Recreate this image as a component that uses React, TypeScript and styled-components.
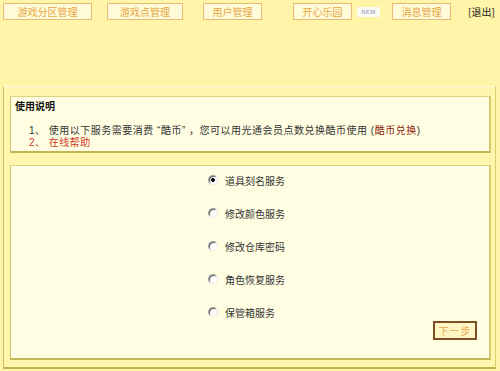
import React, { useState } from "react";
import styled, { createGlobalStyle } from "styled-components";

const Global = createGlobalStyle`
  html, body { margin: 0; padding: 0; background: #fff4a8; }
  body { font-family: "Noto Sans CJK SC", "Noto Sans", sans-serif; }
`;

const Page = styled.div`
  width: 500px;
  height: 371px;
  background: #fff4a8;
  overflow: hidden;
  font-family: "Noto Sans CJK SC", "Noto Sans", sans-serif;
`;

const Nav = styled.div`
  display: flex;
  align-items: center;
  height: 17px;
  padding: 3px 0 0 3px;
`;

const NavButton = styled.div<{ $w: number; $ml: number }>`
  box-sizing: border-box;
  width: ${(p) => p.$w}px;
  margin-left: ${(p) => p.$ml}px;
  height: 17px;
  border: 1px solid #e9bd72;
  box-shadow: inset 0 0 0 1px #fff8dc;
  background: #fffbd6;
  color: #e8a443;
  font-size: 10px;
  line-height: 15px;
  text-align: center;
  white-space: nowrap;
`;

const NewTag = styled.div<{ $ml: number }>`
  margin-left: ${(p) => p.$ml}px;
  width: 23px;
  height: 10px;
  background: #fbfbf2;
  color: #8c96b8;
  font-family: "DejaVu Sans", sans-serif;
  font-size: 6px;
  line-height: 10px;
  text-align: center;
  letter-spacing: 0.3px;
`;

const Exit = styled.div<{ $ml: number }>`
  margin-left: ${(p) => p.$ml}px;
  color: #222;
  font-size: 10px;
  line-height: 17px;
  white-space: nowrap;
`;

const Panel = styled.div`
  box-sizing: border-box;
  margin: 66px 0 0 3px;
  width: 493px;
  height: 283px;
  background: #fff5ad;
  border-top: 1px solid #fffbe2;
  border-left: 1px solid #c7bb5c;
  border-right: 1px solid #d9ce72;
  border-bottom: 2px solid #bdb24f;
  padding: 9px 4px 7px 6px;
  display: flex;
  flex-direction: column;
  gap: 12px;
`;

const Box = styled.div<{ $h: number }>`
  box-sizing: border-box;
  width: 481px;
  height: ${(p) => p.$h}px;
  background: #fffee2;
  border-top: 1px solid #ddd27e;
  border-left: 1px solid #cfc468;
  border-right: 2px solid #d6cb70;
  border-bottom: 2px solid #c2b654;
`;

const InfoBox = styled(Box)`
  padding: 3px 0 0 4px;
`;

const Title = styled.div`
  font-size: 10px;
  line-height: 12px;
  font-weight: bold;
  color: #111;
`;

const InfoList = styled.div`
  margin-top: 13px;
  padding-left: 14px;
  display: flex;
  flex-direction: column;
`;

const InfoLine = styled.div<{ $red?: boolean }>`
  font-family: "Liberation Sans", "Noto Sans CJK SC", sans-serif;
  font-size: 10px;
  line-height: 11.5px;
  height: 11.5px;
  letter-spacing: 0.5px;
  color: ${(p) => (p.$red ? "#d03a2a" : "#333")};
  white-space: nowrap;
`;

const Link = styled.span`
  color: #8a1a0a;
`;

const OptionsBox = styled(Box)`
  padding-top: 8px;
  display: flex;
  flex-direction: column;
`;

const OptionList = styled.div`
  display: flex;
  flex-direction: column;
  gap: 21px;
  padding-left: 197px;
`;

const Option = styled.label`
  display: flex;
  align-items: center;
  height: 12px;
  font-size: 10px;
  color: #333;
  cursor: pointer;
`;

const Radio = styled.input`
  appearance: none;
  -webkit-appearance: none;
  box-sizing: border-box;
  width: 10px;
  height: 10px;
  margin: 0 7px 0 0;
  border-radius: 50%;
  border: 1px solid #a0a0a0;
  border-bottom-color: #e6e6e6;
  border-right-color: #e6e6e6;
  background: #fff;
  box-shadow: inset 1px 1px 0 #606060;
  &:checked {
    background: radial-gradient(circle, #111 0 1.6px, #fff 2.2px);
  }
`;

const Footer = styled.div`
  display: flex;
  justify-content: flex-end;
  padding-right: 12px;
  margin-top: 3px;
`;

const NextButton = styled.button`
  box-sizing: border-box;
  width: 44px;
  height: 19px;
  padding: 0;
  border: 2px solid #7e4e24;
  background: #fff6c6;
  color: #eaa84e;
  font-family: "Noto Sans CJK SC", sans-serif;
  font-size: 10px;
  line-height: 14px;
  letter-spacing: 1px;
  cursor: pointer;
`;

const options = ["道具刻名服务", "修改颜色服务", "修改仓库密码", "角色恢复服务", "保管箱服务"];

export default function App() {
  const [sel, setSel] = useState(0);
  return (
    <Page>
      <Global />
      <Nav>
        <NavButton $w={89} $ml={0}>游戏分区管理</NavButton>
        <NavButton $w={76} $ml={15}>游戏点管理</NavButton>
        <NavButton $w={59} $ml={20}>用户管理</NavButton>
        <NavButton $w={59} $ml={31}>开心乐园</NavButton>
        <NewTag $ml={5}>NEW</NewTag>
        <NavButton $w={59} $ml={12}>消息管理</NavButton>
        <Exit $ml={17}>[退出]</Exit>
      </Nav>
      <Panel>
        <InfoBox $h={57}>
          <Title>使用说明</Title>
          <InfoList>
            <InfoLine>
              1、 使用以下服务需要消费 “酷币” ，您可以用光通会员点数兑换酷币使用 (<Link>酷币兑换</Link>)
            </InfoLine>
            <InfoLine $red>2、 在线帮助</InfoLine>
          </InfoList>
        </InfoBox>
        <OptionsBox $h={195}>
          <OptionList>
            {options.map((o, i) => (
              <Option key={o}>
                <Radio type="radio" name="svc" checked={sel === i} onChange={() => setSel(i)} />
                {o}
              </Option>
            ))}
          </OptionList>
          <Footer>
            <NextButton>下一步</NextButton>
          </Footer>
        </OptionsBox>
      </Panel>
    </Page>
  );
}
